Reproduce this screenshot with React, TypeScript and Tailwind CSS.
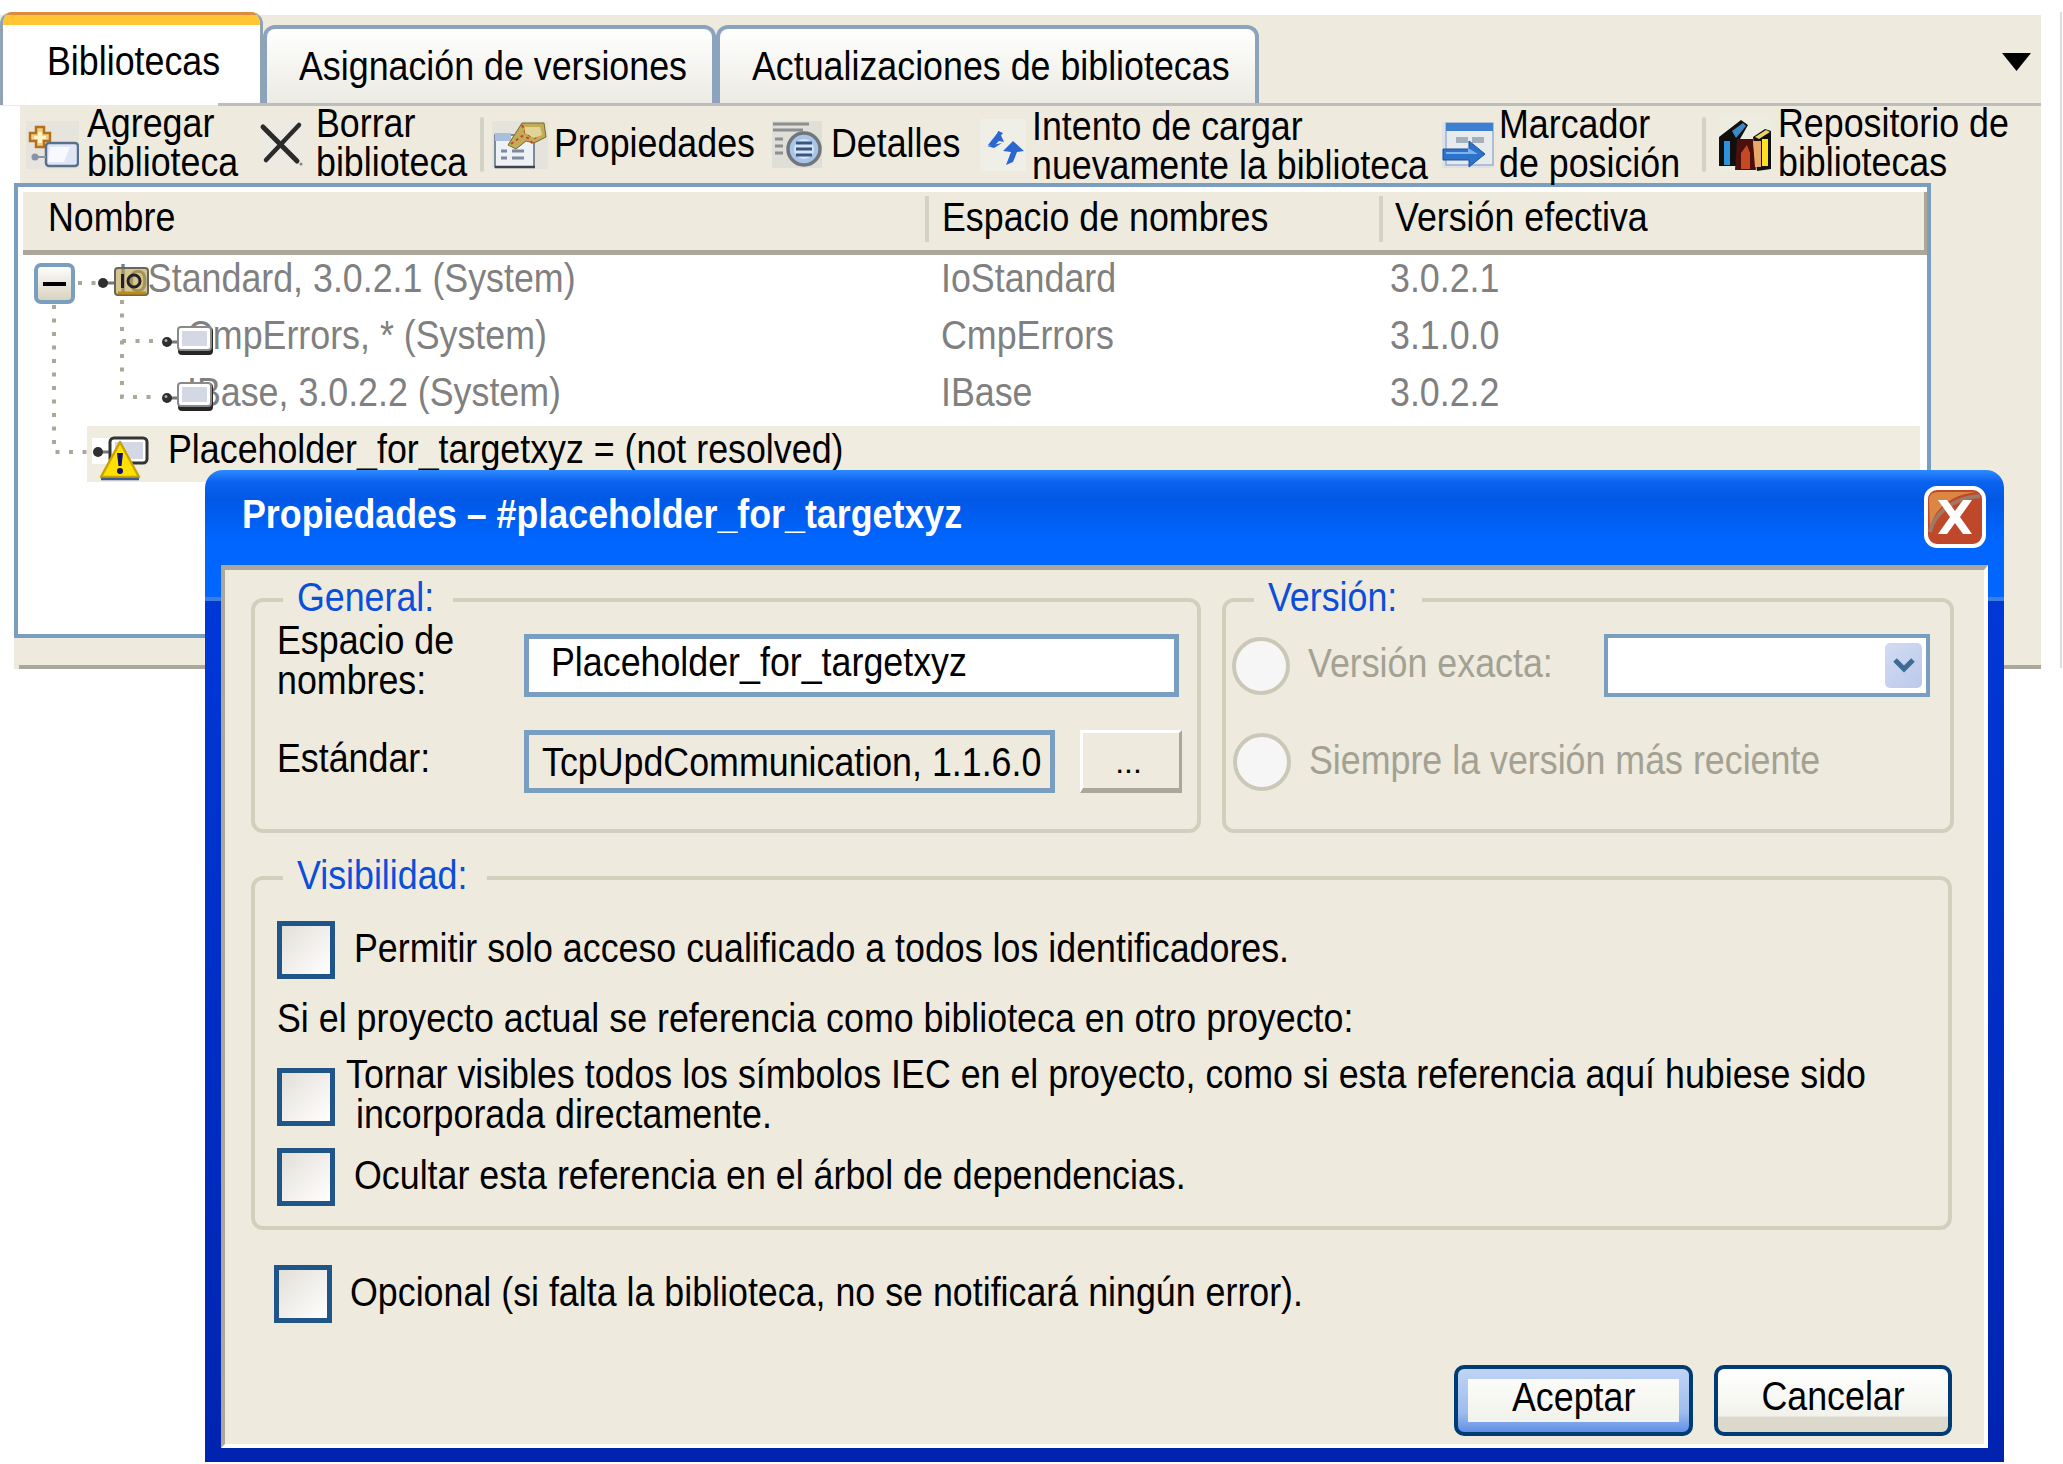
import type { ReactNode } from 'react'

function T({ children, className = '' }: { children: ReactNode; className?: string }) {
  return <span className={`block whitespace-nowrap origin-left scale-x-[.873] ${className}`}>{children}</span>
}

function AddIcon() {
  return (
    <svg width="53" height="48" viewBox="0 0 53 48" className="shrink-0">
      <rect width="53" height="48" fill="#e6e4dc" />
      <path d="M10 6h8v6h6v8h-6v6h-8v-6H4v-8h6z" fill="#f0d080" stroke="#b5701c" strokeWidth="2.5" />
      <path d="M12 11h4v11h-4zM8 15h12v3H8z" fill="#fff4c8" />
      <rect x="20" y="22" width="32" height="23" rx="3" fill="#dfe6f5" stroke="#5a6f8c" strokeWidth="2.5" />
      <path d="M24 26h20l-6 15H22z" fill="#f7f9ff" />
      <circle cx="9" cy="36" r="3.5" fill="#8a94a8" />
      <path d="M12 36h8" stroke="#8a94a8" strokeWidth="2" />
    </svg>
  )
}

function CrossIcon() {
  return (
    <svg width="46" height="47" viewBox="0 0 46 47" className="shrink-0">
      <rect width="46" height="47" fill="#eceae2" />
      <path d="M4 6l34 34" stroke="#2b2b2b" strokeWidth="5" strokeLinecap="round" />
      <path d="M40 4L7 39" stroke="#2b2b2b" strokeWidth="4.5" strokeLinecap="round" />
      <circle cx="42" cy="43" r="1.5" fill="#8a8a60" />
    </svg>
  )
}

function PropsIcon() {
  return (
    <svg width="56" height="48" viewBox="0 0 56 48" className="shrink-0">
      <rect width="56" height="48" fill="#e4e4dc" />
      <rect x="3" y="14" width="39" height="32" fill="#eef1f5" stroke="#5b6a80" strokeWidth="1.5" />
      <rect x="3" y="12" width="16" height="8" fill="#a8c0dc" />
      <path d="M9 30h6M20 30h12M9 37h6M20 37h12" stroke="#7c8aa0" strokeWidth="3" />
      <path d="M3 46h40" stroke="#3c4450" strokeWidth="2.5" />
      <path d="M16 24L30 2h22l2 14-12 6-8-2-10 8z" fill="#c2ac58" stroke="#77692e" strokeWidth="1" />
      <path d="M19 23l11-8 6 2 5 6M30 4l4 9 12 5" fill="none" stroke="#c8452a" strokeWidth="2" strokeDasharray="3 3" />
      <path d="M33 6h15l2 8-8 3-9-5z" fill="#e2d494" />
    </svg>
  )
}

function DetailsIcon() {
  return (
    <svg width="50" height="47" viewBox="0 0 50 47" className="shrink-0">
      <rect width="50" height="47" fill="#dfdfd8" />
      <path d="M1 3h36M1 9h30M3 18h8M3 25h8M3 32h8" stroke="#8b8f90" strokeWidth="3" />
      <circle cx="32" cy="28" r="16" fill="#a9c6ea" stroke="#71767b" strokeWidth="3.5" />
      <circle cx="32" cy="28" r="10" fill="#d5e5f7" />
      <path d="M24 22h16M24 28h16M24 34h16" stroke="#3a567f" strokeWidth="3" />
    </svg>
  )
}

function ReloadIcon() {
  return (
    <svg width="46" height="52" viewBox="0 0 46 52" className="shrink-0">
      <rect width="46" height="52" fill="#efefe8" />
      <path d="M19 12L8 26l6 1 5-5 5 1z" fill="#2a68d0" />
      <path d="M18 12l5 2-7 9z" fill="#2a68d0" />
      <path d="M7 27l10-2 5-1-8 5z" fill="#2a68d0" />
      <path d="M33 22l11 10-7 1-4 10-7 3 5-13-8-1z" fill="#2a68d0" />
    </svg>
  )
}

function PlaceholderIcon() {
  return (
    <svg width="52" height="46" viewBox="0 0 52 46" className="shrink-0">
      <rect width="52" height="46" fill="#dfe2e4" />
      <rect x="4" y="1" width="47" height="42" fill="#e8ebee" stroke="#9ab2cf" strokeWidth="1.5" />
      <rect x="4" y="1" width="47" height="8" fill="#3f7fd0" />
      <rect x="14" y="15" width="12" height="6" fill="#a4afbc" />
      <rect x="30" y="15" width="12" height="6" fill="#a4afbc" />
      <path d="M1 27h26v-8l16 13-16 13v-7H1z" fill="#2d73cc" stroke="#1f4f96" strokeWidth="1" />
      <path d="M4 30h22v-4l10 6H4z" fill="#7eb2ea" />
    </svg>
  )
}

function BooksIcon() {
  return (
    <svg width="54" height="55" viewBox="0 0 54 55" className="shrink-0">
      <rect width="54" height="55" fill="#ededdf" />
      <path d="M0 20L22 3l7 5-8 14v27H0z" fill="#10100f" />
      <path d="M5 24h6v24H5z" fill="#2e93d8" />
      <path d="M13 14l11-8 3 3-10 12z" fill="#3e88c8" />
      <path d="M18 22h16l3 31H16z" fill="#4c0f0c" />
      <path d="M22 36l6-8 3 8v16h-9z" fill="#c34a25" />
      <path d="M34 20l12-8 6 2v38l-14 2z" fill="#111" />
      <path d="M34 24h8v26h-6z" fill="#e8a868" />
      <path d="M43 22h6v27h-6z" fill="#ffe020" />
      <path d="M36 20l11-7 4 2-11 7z" fill="#e9d46a" />
    </svg>
  )
}

function Sep({ className = '' }: { className?: string }) {
  return <div className={`w-[4px] h-[55px] shrink-0 bg-[#d4d1c6] rounded-sm ${className}`} />
}

function ToolItem({ icon, children, className = '' }: { icon: ReactNode; children: ReactNode; className?: string }) {
  return <div className={`flex items-center shrink-0 ${className}`}>{icon}{children}</div>
}

function Chip({ x, y }: { x: number; y: number }) {
  return (
    <g transform={`translate(${x} ${y})`}>
      <path d="M9 17h10" stroke="#777" strokeWidth="3" />
      <circle cx="7" cy="17" r="5" fill="#2f2f2f" />
      <circle cx="6" cy="15.5" r="1.5" fill="#aaa" />
      <rect x="18" y="2" width="35" height="28" rx="4" fill="#262626" />
      <rect x="18" y="2" width="33" height="23" rx="3" fill="#ffffff" stroke="#8a8a8a" strokeWidth="2" />
      <rect x="22" y="6" width="25" height="15" fill="#d4d8e4" />
    </g>
  )
}

function TreeDrawing() {
  return (
    <svg width="220" height="235" viewBox="18 255 220 235" className="absolute left-0 top-0 z-10">
      <g stroke="#aca899" strokeWidth="4" strokeDasharray="4 9.5" fill="none">
        <path d="M54 305V452H94" />
        <path d="M78 283H96" />
        <path d="M122 300V397H160" />
        <path d="M122 341H160" />
      </g>
      <rect x="36" y="265" width="37" height="37" rx="5" fill="url(#minus)" stroke="#7a9ebf" strokeWidth="4" />
      <rect x="43" y="282" width="23" height="4" fill="#000" />
      <defs>
        <linearGradient id="minus" x1="0" y1="0" x2="0" y2="1">
          <stop offset="0" stopColor="#ffffff" />
          <stop offset="1" stopColor="#d6d0bc" />
        </linearGradient>
      </defs>
      <path d="M104 283h12" stroke="#777" strokeWidth="3" />
      <circle cx="103" cy="283" r="5" fill="#2f2f2f" />
      <rect x="115" y="268" width="33" height="27" rx="3" fill="#b9a048" fillOpacity=".6" stroke="#66665c" strokeWidth="2" />
      <path d="M118 293h28" stroke="#c08a10" strokeWidth="3" />
      <rect x="121" y="274" width="3" height="14" fill="#222" />
      <circle cx="134" cy="281" r="6" fill="none" stroke="#222" strokeWidth="3" />
      <Chip x={160} y={325} />
      <Chip x={160} y={381} />
      <rect x="92" y="438" width="20" height="26" fill="#ffffff" />
      <path d="M100 452h12" stroke="#777" strokeWidth="3" />
      <circle cx="98" cy="452" r="5" fill="#2f2f2f" />
      <rect x="110" y="438" width="37" height="25" rx="4" fill="#fff" stroke="#333" strokeWidth="3" />
      <rect x="115" y="442" width="28" height="17" fill="#d4d8e4" />
      <path d="M120 442L139 477H101Z" fill="#ffe000" stroke="#c9a400" strokeWidth="2.5" strokeLinejoin="round" />
      <path d="M101 479h38" stroke="#3c5a90" strokeWidth="2.5" />
      <path d="M117 453h6l-1.5 13h-3z" fill="#10106a" />
      <circle cx="120" cy="471" r="3" fill="#10106a" />
    </svg>
  )
}

function Row({ name, ns, version, className = '' }: { name: string; ns: string; version: string; className?: string }) {
  return (
    <div className="flex items-center h-[57px] text-[#808080]">
      <div className={`w-[923px] shrink-0 ${className}`}><T>{name}</T></div>
      <div className="w-[449px] shrink-0"><T>{ns}</T></div>
      <div><T>{version}</T></div>
    </div>
  )
}

function Group({ legend, className = '', legendBox, children }: { legend: string; className?: string; legendBox: string; children: ReactNode }) {
  return (
    <div className={`relative shrink-0 border-4 border-[#d2d0bc] rounded-[12px] ${className}`}>
      <div className={`absolute -top-[25px] h-[40px] bg-[#eeeade] text-[#0b4ed8] ${legendBox}`}>
        <T className="pl-[16px]">{legend}</T>
      </div>
      {children}
    </div>
  )
}

function Check({ className = '' }: { className?: string }) {
  return <div className={`w-[58px] h-[58px] shrink-0 border-[5px] border-[#1f5588] bg-gradient-to-br from-[#e2dfd8] to-white ${className}`} />
}

function Radio({ className = '' }: { className?: string }) {
  return <div className={`w-[58px] h-[58px] shrink-0 rounded-full border-4 border-[#cbc8b8] bg-[#f6f6f6] ${className}`} />
}

export default function App() {
  return (
    <div className="relative flex items-start w-[2063px] h-[1464px] overflow-hidden bg-white text-black text-[41px] leading-[40px] font-['Liberation_Sans',Arial,sans-serif]">
      <div className="w-[2041px] shrink-0 pt-[12px]">
        {/* tabs */}
        <div className="relative flex h-[94px] bg-[linear-gradient(to_bottom,transparent_3px,#eeeade_3px)]">
          <div className="relative z-10 w-[263px] h-[93px] shrink-0 bg-white border-x-[3px] border-x-[#8fa3b5] rounded-t-[12px] overflow-hidden pl-[44px] pt-[29px]">
            <div className="absolute left-0 top-0 w-full h-[13px] bg-[#ffc535] border-t-[3px] border-[#dd8a3c]" />
            <T>Bibliotecas</T>
          </div>
          <div className="mt-[13px] w-[453px] h-[80px] shrink-0 border-x-4 border-t-4 border-[#8ba3bc] rounded-t-[12px] bg-gradient-to-b from-white to-[#ebeae2] pl-[32px] pt-[17px]">
            <T>Asignación de versiones</T>
          </div>
          <div className="mt-[13px] w-[543px] h-[80px] shrink-0 border-x-4 border-t-4 border-[#8ba3bc] rounded-t-[12px] bg-gradient-to-b from-white to-[#ebeae2] pl-[32px] pt-[17px]">
            <T>Actualizaciones de bibliotecas</T>
          </div>
          <svg width="29" height="18" viewBox="0 0 29 18" className="ml-auto mr-[10px] mt-[41px]">
            <path d="M0 0H29L14.5 18Z" fill="#000" />
          </svg>
          <div className="absolute left-[218px] right-0 bottom-0 h-[3px] bg-[#bdbdbd] z-20" />
        </div>

        {/* toolbar */}
        <div className="ml-[20px] w-[2021px] h-[77px] bg-[#eeeade] flex items-center pl-[6px] leading-[39px]">
          <ToolItem className="w-[233px]" icon={<AddIcon />}>
            <div className="ml-[8px] w-[140px] -mt-[4px]"><T>Agregar</T><T>biblioteca</T></div>
          </ToolItem>
          <ToolItem className="w-[221px]" icon={<CrossIcon />}>
            <div className="ml-[11px] w-[140px] -mt-[4px]"><T>Borrar</T><T>biblioteca</T></div>
          </ToolItem>
          <Sep />
          <ToolItem className="w-[280px] ml-[8px]" icon={<PropsIcon />}>
            <div className="ml-[6px] w-[200px] -mt-[3px]"><T>Propiedades</T></div>
          </ToolItem>
          <ToolItem className="w-[208px]" icon={<DetailsIcon />}>
            <div className="ml-[9px] w-[130px] -mt-[3px]"><T>Detalles</T></div>
          </ToolItem>
          <ToolItem className="w-[462px]" icon={<ReloadIcon />}>
            <div className="ml-[6px] w-[400px] mt-[2px]"><T>Intento de cargar</T><T>nuevamente la biblioteca</T></div>
          </ToolItem>
          <ToolItem className="w-[260px]" icon={<PlaceholderIcon />}>
            <div className="ml-[5px] w-[180px] -mt-[1px]"><T>Marcador</T><T>de posición</T></div>
          </ToolItem>
          <Sep />
          <ToolItem className="ml-[13px]" icon={<BooksIcon />}>
            <div className="ml-[5px] w-[230px] -mt-[4px]"><T>Repositorio de</T><T>bibliotecas</T></div>
          </ToolItem>
        </div>

        {/* library tree */}
        <div className="ml-[14px] w-[2027px] bg-[#eeeade]">
          <div className="w-[1917px] h-[455px] border-4 border-[#7a9ebf] bg-white">
            <div className="mt-[5px] ml-[5px] h-[63px] flex bg-[#eeeade] border-b-[5px] border-[#aca899] border-r-[3px] border-r-[#aca899] pb-[3px]">
              <div className="w-[902px] shrink-0 pl-[25px] flex items-center h-[50px]"><T>Nombre</T></div>
              <div className="w-[4px] h-[46px] mt-[4px] bg-[#d4d1c6] shrink-0" />
              <div className="w-[450px] shrink-0 pl-[13px] flex items-center h-[50px]"><div className="w-[400px]"><T>Espacio de nombres</T></div></div>
              <div className="w-[4px] h-[46px] mt-[4px] bg-[#d4d1c6] shrink-0" />
              <div className="pl-[12px] flex items-center h-[50px]"><div className="w-[300px]"><T>Versión efectiva</T></div></div>
            </div>
            <div className="relative flow-root h-[379px]">
              <TreeDrawing />
              <div className="-mt-[6px]">
                <Row className="pl-[100px]" name="IoStandard, 3.0.2.1 (System)" ns="IoStandard" version="3.0.2.1" />
                <Row className="pl-[169px]" name="CmpErrors, * (System)" ns="CmpErrors" version="3.1.0.0" />
                <Row className="pl-[169px]" name="IBase, 3.0.2.2 (System)" ns="IBase" version="3.0.2.2" />
                <div className="ml-[69px] mr-[7px] mt-[6px] h-[56px] bg-[#f0ecdf] pl-[81px] pt-[3px]">
                  <T>Placeholder_for_targetxyz = (not resolved)</T>
                </div>
              </div>
            </div>
          </div>
          <div className="ml-[5px] h-[31px] border-b-4 border-[#aca899]" />
        </div>
      </div>
      <div className="ml-[19px] mt-[12px] w-[2px] h-[656px] bg-[#dcdcdc]" />

      {/* properties dialog */}
      <div className="absolute z-30 left-[205px] top-[470px] w-[1799px] h-[992px] rounded-t-[18px] bg-[linear-gradient(to_bottom,#2e8aff_0,#0a62ee_12px,#0058e6_30px,#0066ff_70px,#0066ff_127px,#3d7fe0_127px,#3d7fe0_131px,#0038d8_131px,#0024b0_100%)] px-[16px]">
        <div className="h-[95px] flex items-center justify-between pl-[21px] pr-0">
          <div className="font-bold text-white -mt-[7px] w-[800px]"><T>Propiedades – #placeholder_for_targetxyz</T></div>
          <svg width="62" height="62" viewBox="0 0 62 62" className="shrink-0 -mt-[1px] mr-[2px]">
            <rect x="2" y="2" width="58" height="58" rx="11" fill="#c0482a" stroke="#ffffff" strokeWidth="4" />
            <path d="M6 44C8 26 24 9 52 6L14 6Q5 6 5 14z" fill="#dc8644" />
            <path d="M6 46C10 28 28 12 56 10" fill="none" stroke="#9c7a64" strokeWidth="4" />
            <path d="M14 14h9l8 11 8-11h9L36 31l12 17h-9l-8-11-8 11h-9l12-17z" fill="#ffffff" />
          </svg>
        </div>
        <div className="h-[883px] bg-[#eeeade] border-l-4 border-t-[5px] border-[#aca899] border-r-4 border-r-white border-b-4 border-b-white pl-[26px] pt-[28px]">
          <div className="flex">
            <Group legend="General:" legendBox="left-[28px] w-[170px]" className="w-[950px] h-[235px] pl-[22px] pt-[32px]">
              <div className="flex h-[63px]">
                <div className="w-[247px] shrink-0 -mt-[14px]"><T>Espacio de</T><T>nombres:</T></div>
                <div className="w-[655px] h-[63px] border-[5px] border-[#7a9ebf] bg-white pl-[22px] flex items-center pb-[7px]">
                  <div className="w-[500px]"><T>Placeholder_for_targetxyz</T></div>
                </div>
              </div>
              <div className="flex h-[63px] mt-[33px]">
                <div className="w-[247px] shrink-0 mt-[8px]"><T>Estándar:</T></div>
                <div className="w-[531px] h-[63px] border-[5px] border-[#7a9ebf] pl-[13px] flex items-center">
                  <div className="w-[500px]"><T>TcpUpdCommunication, 1.1.6.0</T></div>
                </div>
                <div className="ml-[25px] w-[102px] h-[63px] border-[3px] border-t-white border-l-white border-r-[#aca899] border-b-[#aca899] border-b-[5px] flex items-center justify-center pr-[5px]">
                  <span className="text-[32px] leading-[32px] -mb-[3px]">...</span>
                </div>
              </div>
            </Group>
            <Group legend="Versión:" legendBox="left-[28px] w-[168px]" className="ml-[21px] w-[732px] h-[235px] pl-[6px] pt-[32px] text-[#a3a192]">
              <div className="flex items-center h-[63px]">
                <Radio />
                <div className="ml-[18px] w-[296px] shrink-0 -mt-[5px]"><T>Versión exacta:</T></div>
                <div className="w-[326px] h-[63px] shrink-0 border-4 border-[#7a9ebf] bg-white flex items-center justify-end pr-[4px]">
                  <div className="w-[37px] h-[45px] rounded-[5px] bg-[linear-gradient(135deg,#d2dcf2,#bcc8ec)] flex items-center justify-center">
                    <svg width="24" height="18" viewBox="0 0 24 18">
                      <path d="M3 3l9 9 9-9" fill="none" stroke="#3f6a94" strokeWidth="5" />
                    </svg>
                  </div>
                </div>
              </div>
              <div className="flex items-center h-[63px] mt-[33px]">
                <Radio className="ml-[1px]" />
                <div className="ml-[18px] w-[520px] shrink-0 -mt-[4px]"><T>Siempre la versión más reciente</T></div>
              </div>
            </Group>
          </div>

          <Group legend="Visibilidad:" legendBox="left-[28px] w-[204px]" className="mt-[43px] w-[1701px] h-[354px] pl-[22px] pt-[41px]">
            <div className="flex">
              <Check />
              <div className="ml-[19px] w-[1200px] -mt-[5px] flex items-center"><T>Permitir solo acceso cualificado a todos los identificadores.</T></div>
            </div>
            <div className="mt-[19px] w-[1200px]"><T>Si el proyecto actual se referencia como biblioteca en otro proyecto:</T></div>
            <div className="flex mt-[30px]">
              <Check />
              <div className="ml-[11px] -mt-[14px] w-[1600px]">
                <T>Tornar visibles todos los símbolos IEC en el proyecto, como si esta referencia aquí hubiese sido</T>
                <T className="ml-[10px]">incorporada directamente.</T>
              </div>
            </div>
            <div className="flex mt-[14px]">
              <Check />
              <div className="ml-[19px] w-[1200px] mt-[7px]"><T>Ocultar esta referencia en el árbol de dependencias.</T></div>
            </div>
          </Group>

          <div className="flex mt-[35px] ml-[23px]">
            <Check />
            <div className="ml-[18px] w-[1200px] mt-[7px]"><T>Opcional (si falta la biblioteca, no se notificará ningún error).</T></div>
          </div>

          <div className="flex justify-end gap-[21px] w-[1701px] mt-[42px]">
            <div className="w-[239px] h-[71px] border-4 border-[#003c74] rounded-[10px] bg-[linear-gradient(to_bottom,#c0d4f5,#9dbcee_70%,#5f8fe6)] p-[10px]">
              <div className="h-full bg-[linear-gradient(to_bottom,#fbfbf9,#f2f2ec)] flex items-center justify-center">
                <T className="origin-center! -mt-[7px] text-center">Aceptar</T>
              </div>
            </div>
            <div className="w-[238px] h-[71px] border-4 border-[#003c74] rounded-[10px] bg-[linear-gradient(to_bottom,#ffffff,#f2f2ec_75%,#dcd8cc_76%,#dcd8cc)] flex items-center justify-center pb-[10px]">
              <T className="origin-center!">Cancelar</T>
            </div>
          </div>
        </div>
      </div>
    </div>
  )
}
